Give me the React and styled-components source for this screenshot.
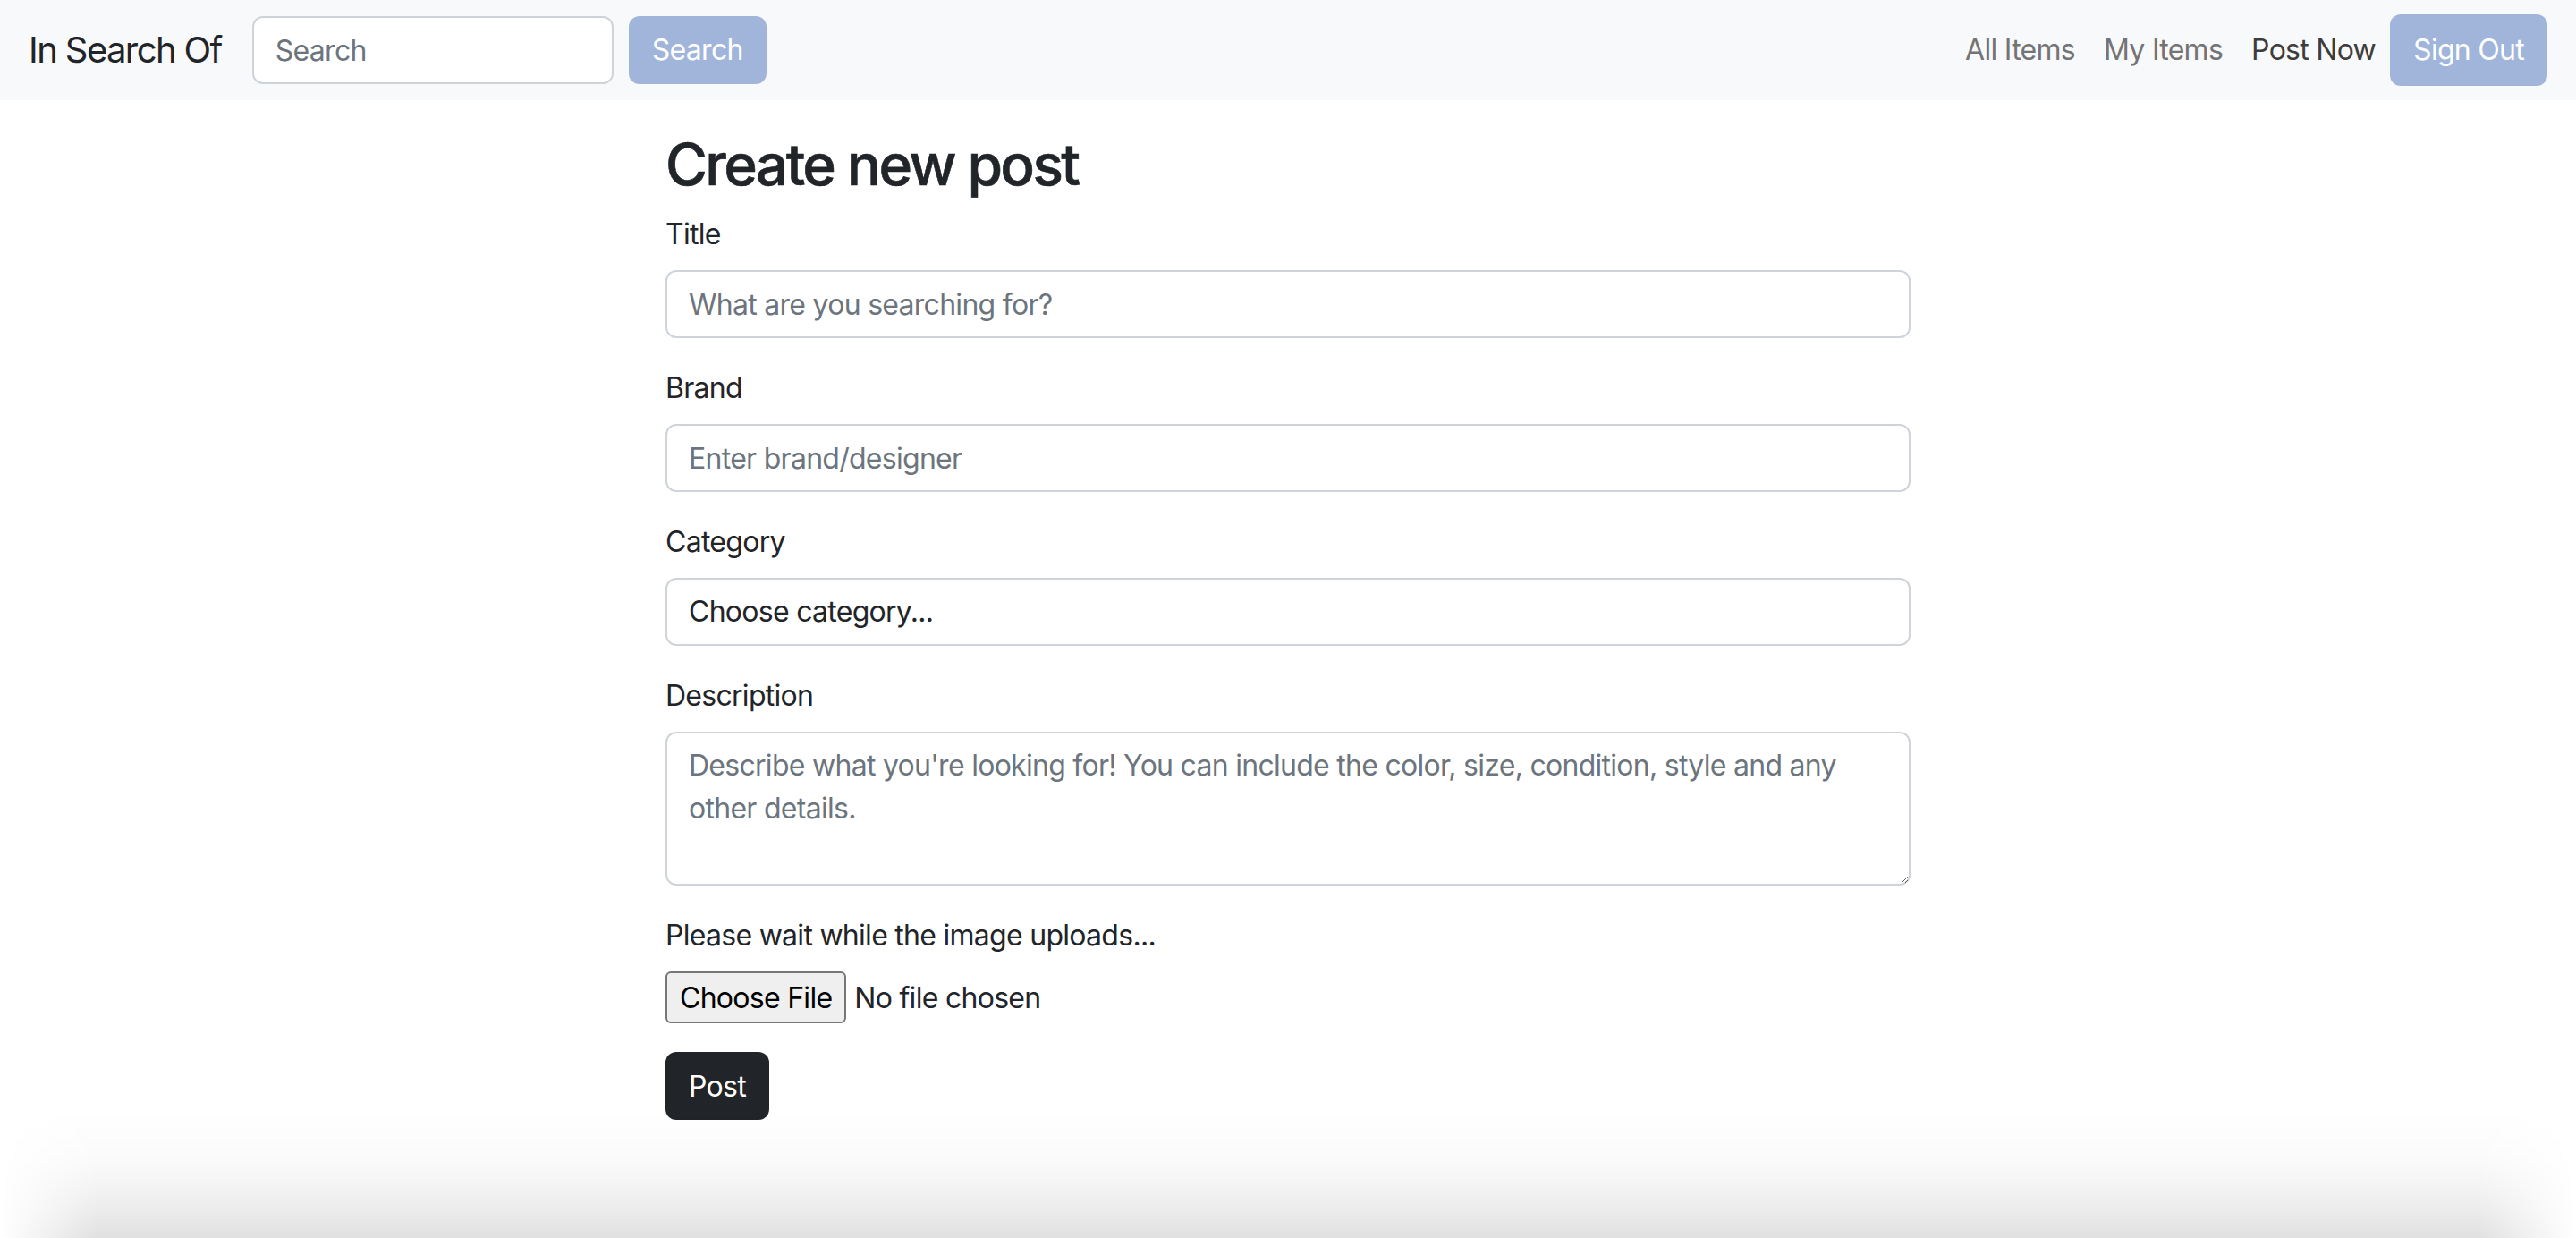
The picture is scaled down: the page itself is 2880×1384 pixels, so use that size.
import React from "react";
import styled, { createGlobalStyle } from "styled-components";

const GlobalStyle = createGlobalStyle`
  * { box-sizing: border-box; }
  html, body { margin: 0; padding: 0; background: #ffffff; }
  body {
    font-family: Inter, "Noto Sans", "Liberation Sans", sans-serif;
    color: #212529;
    font-size: 32px;
    line-height: 48px;
    letter-spacing: -0.72px;
  }
`;

const Page = styled.div`
  min-height: 1384px;
  position: relative;
`;

const NavBar = styled.nav`
  height: 112px;
  background: #f8f9fa;
  display: flex;
  align-items: center;
  padding: 0 32px;
`;

const Brand = styled.a`
  font-size: 40px;
  line-height: 60px;
  letter-spacing: -1.6px;
  color: #212529;
  text-decoration: none;
  margin-right: 34px;
`;

const SearchForm = styled.form`
  display: flex;
  align-items: center;
  gap: 17px;
`;

const SearchInput = styled.input`
  width: 404px;
  height: 76px;
  padding: 0 24px;
  font: inherit;
  font-size: 32px;
  letter-spacing: -0.72px;
  color: #212529;
  background: #fff;
  border: 2px solid #ced4da;
  border-radius: 12px;
  outline: none;
  &::placeholder { color: #6c757d; }
`;

const NavButton = styled.button`
  height: ${(p) => p.$h || 76}px;
  padding: 0 ${(p) => p.$px || 26}px;
  font: inherit;
  font-size: 32px;
  letter-spacing: -0.72px;
  color: #ffffff;
  background: #a1b5da;
  border: none;
  border-radius: 12px;
`;

const NavLinks = styled.ul`
  list-style: none;
  margin: 0 0 0 auto;
  padding: 0;
  display: flex;
  align-items: center;
`;

const NavLink = styled.a`
  display: block;
  padding: 0 16px;
  font-size: 32px;
  line-height: 48px;
  text-decoration: none;
  color: ${(p) => (p.$active ? "#3d3d3d" : "#747474")};
`;

const Main = styled.main`
  width: 1392px;
  margin: 0 auto;
  padding-top: 34px;
`;

const Heading = styled.h2`
  margin: 0 0 16px;
  font-size: 64px;
  line-height: 76px;
  font-weight: 500;
  letter-spacing: -2.6px;
  color: #212529;
  -webkit-text-stroke: 0.6px #212529;
`;

const Group = styled.div`
  margin-bottom: 32px;
`;

const Label = styled.label`
  display: block;
  margin-bottom: 16px;
  font-size: 32px;
  line-height: 48px;
`;

const controlBase = `
  display: block;
  width: 100%;
  padding: 12px 24px;
  font-family: inherit;
  font-size: 32px;
  line-height: 48px;
  letter-spacing: -0.72px;
  color: #212529;
  background: #fff;
  border: 2px solid #ced4da;
  border-radius: 12px;
  outline: none;
  &::placeholder { color: #6c757d; }
`;

const Input = styled.input`
  ${controlBase}
  height: 76px;
`;

const Select = styled.select`
  ${controlBase}
  height: 76px;
  appearance: none;
  -webkit-appearance: none;
`;

const TextArea = styled.textarea`
  ${controlBase}
  height: 172px;
  resize: vertical;
`;

const FileInput = styled.input`
  display: block;
  font-family: inherit;
  font-size: 32px;
  line-height: 48px;
  letter-spacing: -0.72px;
  color: #212529;
  &::file-selector-button {
    font-family: inherit;
    font-size: 32px;
    letter-spacing: -0.72px;
    color: #000;
    background: #efefef;
    border: 2px solid #767676;
    border-radius: 6px;
    height: 58px;
    padding: 0 14px;
    margin-right: 9px;
  }
`;

const SubmitButton = styled.button`
  height: 76px;
  padding: 0 26px;
  font-family: inherit;
  font-size: 32px;
  letter-spacing: -0.72px;
  color: #fff;
  background: #212529;
  border: none;
  border-radius: 12px;
`;

const BottomShade = styled.div`
  position: fixed;
  left: 0;
  right: 0;
  bottom: 0;
  height: 140px;
  pointer-events: none;
  background: linear-gradient(to bottom, rgba(0,0,0,0) 0%, rgba(0,0,0,0.02) 40%, rgba(0,0,0,0.07) 75%, rgba(0,0,0,0.12) 100%);
  -webkit-mask-image: linear-gradient(to right, transparent 0, #000 110px, #000 calc(100% - 110px), transparent 100%);
  mask-image: linear-gradient(to right, transparent 0, #000 110px, #000 calc(100% - 110px), transparent 100%);
`;

export default function App() {
  return (
    <Page>
      <GlobalStyle />
      <NavBar>
        <Brand href="#">In Search Of</Brand>
        <SearchForm onSubmit={(e) => e.preventDefault()}>
          <SearchInput type="search" placeholder="Search" />
          <NavButton type="submit">Search</NavButton>
        </SearchForm>
        <NavLinks>
          <li><NavLink href="#">All Items</NavLink></li>
          <li><NavLink href="#">My Items</NavLink></li>
          <li><NavLink href="#" $active>Post Now</NavLink></li>
          <li><NavButton type="button" $h={80} $px={26}>Sign Out</NavButton></li>
        </NavLinks>
      </NavBar>
      <Main>
        <Heading>Create new post</Heading>
        <form onSubmit={(e) => e.preventDefault()}>
          <Group>
            <Label htmlFor="title">Title</Label>
            <Input id="title" placeholder="What are you searching for?" />
          </Group>
          <Group>
            <Label htmlFor="brand">Brand</Label>
            <Input id="brand" placeholder="Enter brand/designer" />
          </Group>
          <Group>
            <Label htmlFor="category">Category</Label>
            <Select id="category" defaultValue="">
              <option value="">Choose category...</option>
            </Select>
          </Group>
          <Group>
            <Label htmlFor="description">Description</Label>
            <TextArea
              id="description"
              rows={3}
              placeholder="Describe what you're looking for! You can include the color, size, condition, style and any other details."
            />
          </Group>
          <Group>
            <Label htmlFor="image">Please wait while the image uploads...</Label>
            <FileInput id="image" type="file" />
          </Group>
          <SubmitButton type="submit">Post</SubmitButton>
        </form>
      </Main>
      <BottomShade />
    </Page>
  );
}
